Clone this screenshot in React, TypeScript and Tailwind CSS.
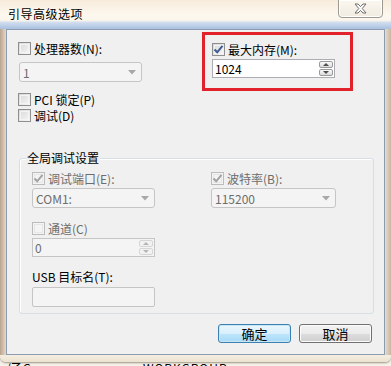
import React from "react"

const font = "font-['Noto_Sans_CJK_SC','Noto_Sans',sans-serif]"

function CheckBox({ checked, disabled }: { checked?: boolean; disabled?: boolean }) {
  return (
    <span
      className={`relative flex h-[13px] w-[13px] shrink-0 items-center justify-center border ${
        disabled ? "border-[#bcbcbc] bg-[#f4f4f4]" : "border-[#8e8f8f] bg-[linear-gradient(135deg,#d8d8d8,#f6f6f6)]"
      }`}
    >
      <span
        className={`absolute inset-[1px] border ${disabled ? "border-[#e6e6e6]" : "border-[#f4f4f4]"}`}
      />
      {checked && (
        <svg width="11" height="11" viewBox="0 0 11 11" className="relative">
          <path
            d="M1.5 5.5 L4.2 8.3 L9.5 1.8"
            fill="none"
            stroke={disabled ? "#a3a3a3" : "#3f5b94"}
            strokeWidth="2"
          />
        </svg>
      )}
    </span>
  )
}

function CheckRow({
  label,
  checked,
  disabled,
}: {
  label: string
  checked?: boolean
  disabled?: boolean
}) {
  return (
    <div className="flex h-[13px] items-center gap-[3px]">
      <CheckBox checked={checked} disabled={disabled} />
      <span className={`text-[12px] leading-[13px] ${disabled ? "text-[#6d6d6d]" : "text-black"}`}>
        {label}
      </span>
    </div>
  )
}

function Select({ value, width }: { value: string; width: string }) {
  return (
    <div
      className={`flex h-[20px] ${width} items-center justify-between rounded-[3px] border border-[#c5c5c5] bg-[#f4f4f4] pl-[3px] pr-[5px]`}
    >
      <span className="text-[12px] leading-[13px] text-[#6d6d6d]">{value}</span>
      <svg width="8" height="5" viewBox="0 0 8 5">
        <path d="M0 0 H8 L4 4.5 Z" fill="#a8a8a8" />
      </svg>
    </div>
  )
}

function Spin({ value, disabled }: { value: string; disabled?: boolean }) {
  return (
    <div
      className={`flex h-[19px] w-[123px] items-stretch border ${
        disabled ? "border-[#c5c5c5] bg-[#f4f4f4]" : "border-[#abadb3] bg-white"
      }`}
    >
      <span
        className={`flex-1 pl-[2px] text-[12px] leading-[17px] ${disabled ? "text-[#6d6d6d]" : "text-black"}`}
      >
        {value}
      </span>
      <div className="flex w-[16px] flex-col gap-[1px] p-[1px]">
        {[0, 1].map((i) => (
          <div
            key={i}
            className={`flex flex-1 items-center justify-center rounded-[2px] border ${
              disabled
                ? "border-[#d6d6d6] bg-[#f2f2f2]"
                : "border-[#9a9a9a] bg-[linear-gradient(to_bottom,#fafafa,#dcdcdc)]"
            }`}
          >
            <svg width="6" height="3" viewBox="0 0 6 3">
              <path d={i === 0 ? "M0 3 L3 0 L6 3 Z" : "M0 0 L3 3 L6 0 Z"} fill={disabled ? "#b5b5b5" : "#4d4d4d"} />
            </svg>
          </div>
        ))}
      </div>
    </div>
  )
}

function Button({ label, isDefault }: { label: string; isDefault?: boolean }) {
  return (
    <button
      className={`flex h-[19px] w-[73px] items-center justify-center rounded-[3px] border text-[13px] leading-[13px] text-black ${
        isDefault
          ? "border-[#3c7fb1] bg-[linear-gradient(to_bottom,#eaf6fd_0%,#d9f0fc_50%,#bee6fd_51%,#a7d9f5_100%)] shadow-[inset_0_0_0_1px_#c9e6f7]"
          : "border-[#707070] bg-[linear-gradient(to_bottom,#f2f2f2_0%,#ebebeb_50%,#dddddd_51%,#cfcfcf_100%)] shadow-[inset_0_0_0_1px_#fcfcfc]"
      }`}
    >
      {label}
    </button>
  )
}

export default function App() {
  return (
    <div className={`relative h-[366px] w-[391px] overflow-hidden bg-[#f6f2ea] ${font}`}>
      {/* title bar */}
      <div className="relative h-[29px] bg-[linear-gradient(to_bottom,#f7ecdc_0%,#fdf8ef_55%,#fbf6ec_70%,#cfdcee_78%,#a9c0e0_100%)]">
        <span className="absolute left-[8px] top-[7px] text-[12px] leading-[14px] tracking-[0.5px] text-black">
          引导高级选项
        </span>
        <div className="absolute right-[8px] top-[-1px] flex h-[19px] w-[45px] items-center justify-center rounded-b-[4px] border border-[#9d9a94] bg-[linear-gradient(to_bottom,#fbf7f0,#f1ebe0)] shadow-[inset_0_0_0_1px_#ffffff]">
          <svg width="13" height="11" viewBox="0 0 13 11">
            <path
              d="M1 1 H4 L6.5 3.6 L9 1 H12 L8.2 5.5 L12 10 H9 L6.5 7.4 L4 10 H1 L4.8 5.5 Z"
              fill="#ffffff"
              stroke="#6c6c6c"
              strokeWidth="1"
              strokeLinejoin="round"
            />
          </svg>
        </div>
      </div>

      <div className="flex h-[326px]">
        <div className="w-[6px] bg-[linear-gradient(to_right,#b9a48f,#e6d9c6)]" />
        {/* client area */}
        <div className="flex w-[379px] flex-col border border-[#8d9cb0] bg-[#f0f0f0]">
          <div className="flex">
            <div className="ml-[11px] mt-[12px] flex w-[184px] flex-col">
              <CheckRow label="处理器数(N):" />
              <div className="ml-[1px] mt-[7px]">
                <Select value="1" width="w-[123px]" />
              </div>
              <div className="mt-[11px]">
                <CheckRow label="PCI 锁定(P)" />
              </div>
              <div className="mt-[3px]">
                <CheckRow label="调试(D)" />
              </div>
            </div>
            <div className="mt-[2px] flex h-[59px] w-[151px] flex-col border-[3px] border-[#e2222b] pl-[7px] pt-[8px]">
              <CheckRow label="最大内存(M):" checked />
              <div className="mt-[3px]">
                <Spin value="1024" />
              </div>
            </div>
          </div>

          {/* group box */}
          <div className="relative ml-[12px] mt-[36px] flex h-[156px] w-[355px] flex-col rounded-[3px] border border-[#d5dfe5] pl-[12px] pt-[13px] shadow-[inset_1px_1px_0_#ffffff]">
            <span className="absolute left-[6px] top-[-8px] bg-[#f0f0f0] px-[1px] text-[12px] leading-[14px] text-black">
              全局调试设置
            </span>
            <div className="flex">
              <div className="flex w-[179px] flex-col">
                <CheckRow label="调试端口(E):" checked disabled />
                <div className="mt-[3px]">
                  <Select value="COM1:" width="w-[123px]" />
                </div>
              </div>
              <div className="flex flex-col">
                <CheckRow label="波特率(B):" checked disabled />
                <div className="mt-[3px]">
                  <Select value="115200" width="w-[125px]" />
                </div>
              </div>
            </div>
            <div className="mt-[14px]">
              <CheckRow label="通道(C)" disabled />
            </div>
            <div className="mt-[3px]">
              <Spin value="0" disabled />
            </div>
            <span className="mt-[13px] text-[12px] leading-[13px] text-black">USB 目标名(T):</span>
            <div className="mt-[4px] h-[20px] w-[123px] rounded-[2px] border border-[#c5c5c5] bg-[#f4f4f4]" />
          </div>

          <div className="mr-[12px] mt-[10px] flex justify-end gap-[8px]">
            <Button label="确定" isDefault />
            <Button label="取消" />
          </div>
        </div>
        <div className="flex-1 bg-[linear-gradient(to_right,#e6dccb,#c9b59f)]" />
      </div>

      {/* bottom frame */}
      <div className="h-[7px] rounded-b-[6px] bg-[linear-gradient(to_bottom,#f5eee0,#ece2d0)] shadow-[0_1px_2px_#9e9484]" />
      <div className="flex h-[4px] items-start overflow-visible text-[12px] leading-[12px] text-black">
        <span className="ml-[6px]">/乙G</span>
        <span className="ml-[112px] tracking-[1px]">WORKGROUP</span>
      </div>
    </div>
  )
}
